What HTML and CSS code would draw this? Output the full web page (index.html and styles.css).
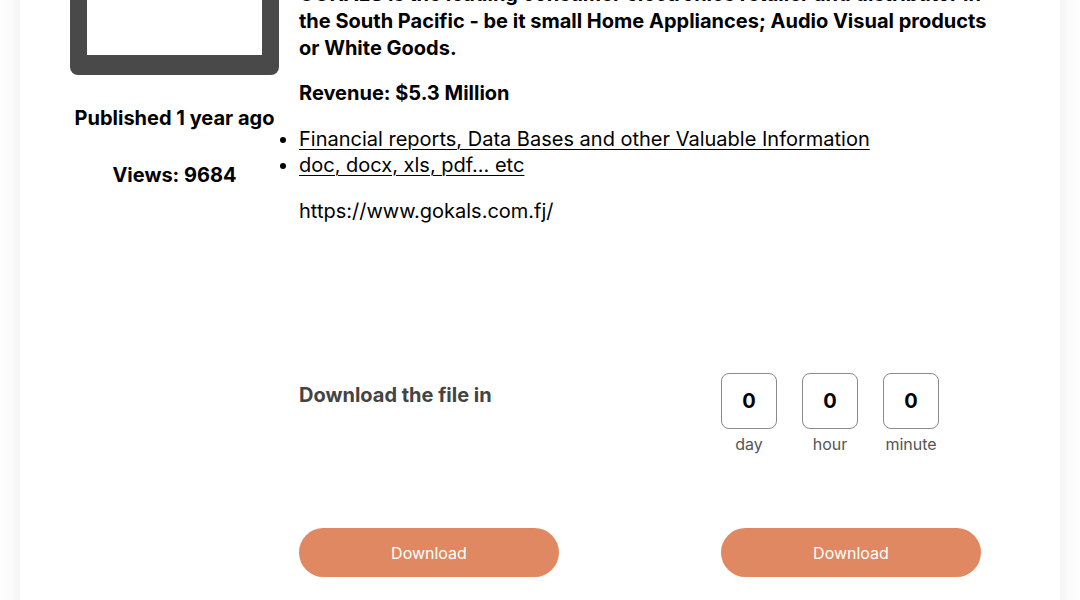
FILE: index.html
```html
<!DOCTYPE html>
<html>
<head>
<meta charset="utf-8">
<link rel="stylesheet" href="styles.css">
</head>
<body>
<div class="page">
  <div class="card">
    <aside class="side">
      <div class="thumb"><div class="thumb-inner"></div></div>
      <p class="meta">Published 1 year ago</p>
      <p class="meta">Views: 9684</p>
    </aside>
    <main class="main">
      <p class="lead">GOKALS is the leading consumer electronics retailer and distributor in the South Pacific - be it small Home Appliances; Audio Visual products or White Goods.</p>
      <p class="lead rev">Revenue: $5.3 Million</p>
      <ul class="links">
        <li><a href="#">Financial reports, Data Bases and other Valuable Information</a></li>
        <li><a href="#">doc, docx, xls, pdf... etc</a></li>
      </ul>
      <p class="url">https://www.gokals.com.fj/</p>
      <div class="dl-grid">
        <div class="dl-title">Download the file in</div>
        <div class="countdown">
          <div class="unit"><div class="box">0</div><div class="lbl">day</div></div>
          <div class="unit"><div class="box">0</div><div class="lbl">hour</div></div>
          <div class="unit"><div class="box">0</div><div class="lbl">minute</div></div>
        </div>
        <div><button class="btn">Download</button></div>
        <div><button class="btn">Download</button></div>
      </div>
    </main>
  </div>
</div>
</body>
</html>
```
FILE: styles.css
```css
html, body {
  margin: 0;
  padding: 0;
  background: #fdfdfd;
  font-family: Inter, "Liberation Sans", sans-serif;
  color: #000;
  overflow: hidden;
}
.page {
  padding: 0 20px;
}
.card {
  margin-top: -149px;
  background: #fff;
  box-shadow: 0 0 18px rgba(0, 0, 0, 0.07);
  padding: 0 50px 40px 50px;
  display: flex;
  gap: 20px;
  min-height: 800px;
}
.side {
  width: 209px;
  flex: none;
  text-align: center;
  padding-top: 39px;
}
.thumb {
  background: #494949;
  border-radius: 8px;
  padding: 17px 17px 20px 17px;
}
.thumb-inner {
  background: #fff;
  height: 148px;
}
.meta {
  font-size: 20px;
  line-height: 27px;
  font-weight: 700;
  margin: 30px 0 0 0;
}
.main {
  flex: 1;
  padding-top: 130px;
}
.lead {
  font-size: 20px;
  line-height: 27px;
  font-weight: 700;
  margin: 0 0 18px 0;
}
.lead.rev {
  margin-bottom: 19px;
}
.links {
  margin: 0 0 20px 0;
  padding-left: 0;
  list-style-position: outside;
  font-size: 20px;
  line-height: 26px;
}
.links li {
  line-height: 26px;
}
.links a {
  color: #000;
  text-decoration: underline;
  text-underline-offset: 3px;
  text-decoration-thickness: 1px;
}
.url {
  font-size: 20px;
  line-height: 27px;
  margin: 0;
}
.dl-grid {
  margin-top: 148px;
  display: grid;
  grid-template-columns: 402px 1fr;
  column-gap: 20px;
  row-gap: 74px;
}
.dl-title {
  font-size: 20px;
  font-weight: 700;
  color: #444;
  line-height: 27px;
  padding-top: 9px;
}
.countdown {
  display: flex;
  gap: 25px;
}
.unit {
  width: 56px;
  text-align: center;
}
.box {
  width: 54px;
  height: 54px;
  border: 1px solid #8a8a8a;
  border-radius: 8px;
  display: flex;
  align-items: center;
  justify-content: center;
  font-size: 20px;
  font-weight: 700;
}
.lbl {
  margin-top: 5px;
  font-size: 16px;
  line-height: 20px;
  color: #555;
}
.btn {
  width: 260px;
  height: 49px;
  border: none;
  border-radius: 25px;
  background: #e08862;
  color: #fff;
  font-family: Inter, "Liberation Sans", sans-serif;
  font-size: 16px;
  cursor: pointer;
}
```
